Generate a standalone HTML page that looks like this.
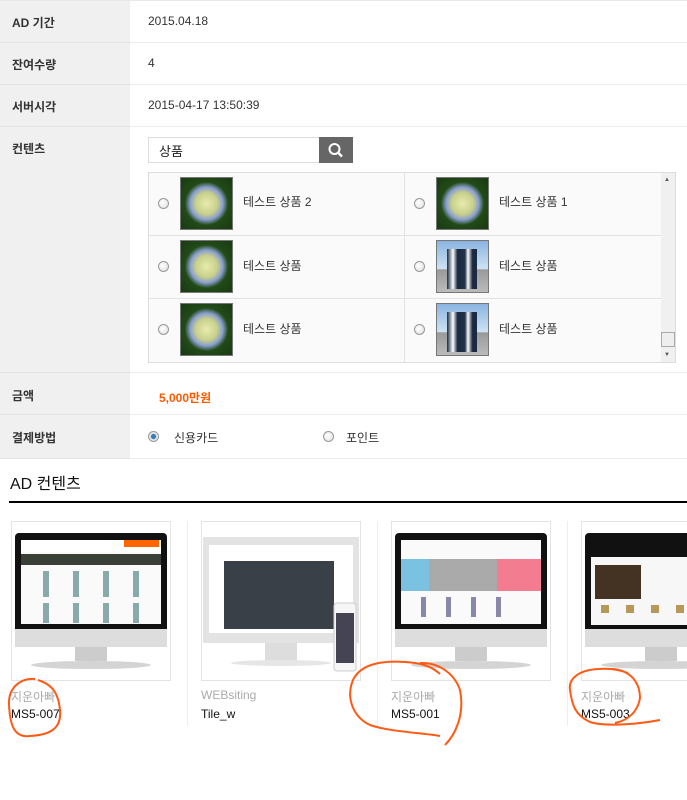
<!DOCTYPE html>
<html><head><meta charset="utf-8"><style>
*{margin:0;padding:0;box-sizing:border-box}
body{width:687px;height:800px;background:#fff;font-family:"Liberation Sans","Noto Sans CJK KR",sans-serif;font-size:12px;color:#333;position:relative;overflow:hidden}
.a{position:absolute}
.lab{position:absolute;left:0;width:130px;background:#f0f0f0;border-bottom:1px solid #e2e2e2}
.lab span{position:absolute;left:12px;font-weight:bold;font-size:12px;color:#333}
.val{position:absolute;left:130px;right:0;border-bottom:1px solid #ececec}
.radio{position:absolute;width:11px;height:11px;border-radius:50%;background:radial-gradient(circle at 40% 40%,#fff,#ddd);border:1px solid #999}
.thumb{position:absolute;width:53px;height:53px;border:1px solid #777}
.fl{background:radial-gradient(circle at 50% 50%,#e8ecb0 0,#c8d08a 30%,#8a9fd0 45%,#224a18 60%,#183a12 100%)}
.pg{background:linear-gradient(#8ab4e0,#cfe2f4 55%,#999 56%,#bbb);}
.pg:after{content:"";position:absolute;left:10px;top:8px;width:30px;height:40px;background:linear-gradient(90deg,#1a2a40 0,#fff 20%,#1a2a40 35%,#22334a 60%,#fff 70%,#1a2a40 85%)}
.ct{position:absolute;font-size:12px;color:#333}
.card{position:absolute;top:521px;width:160px;height:160px;border:1px solid #e4e4e4}
.sep{position:absolute;top:521px;width:1px;height:205px;background:#eee}
.g{position:absolute;font-size:12px;color:#aaa}
.k{position:absolute;font-size:12px;color:#111}
</style></head><body>
<div class="a" style="left:0;top:0;width:687px;height:1px;background:#e8e8e8"></div>
<div class="lab" style="top:1px;height:42px"><span style="top:13px">AD 기간</span></div>
<div class="val" style="top:1px;height:42px"><span class="a" style="left:18px;top:13px">2015.04.18</span></div>
<div class="lab" style="top:43px;height:42px"><span style="top:13px">잔여수량</span></div>
<div class="val" style="top:43px;height:42px"><span class="a" style="left:18px;top:13px">4</span></div>
<div class="lab" style="top:85px;height:42px"><span style="top:13px">서버시각</span></div>
<div class="val" style="top:85px;height:42px"><span class="a" style="left:18px;top:13px">2015-04-17 13:50:39</span></div>
<div class="lab" style="top:127px;height:246px"><span style="top:13px">컨텐츠</span></div>
<div class="val" style="top:127px;height:246px"></div>
<div class="a" style="left:148px;top:137px;width:172px;height:26px;border:1px solid #ddd;background:#fff"><span class="a" style="left:10px;top:3px;font-size:13px;color:#222">상품</span></div>
<div class="a" style="left:319px;top:137px;width:34px;height:26px;background:#666">
<svg width="34" height="26"><circle cx="15.5" cy="12" r="5" fill="none" stroke="#fff" stroke-width="2"/><line x1="19" y1="15.5" x2="23" y2="19.5" stroke="#fff" stroke-width="2.4"/></svg></div>
<div class="a" style="left:148px;top:172px;width:528px;height:191px;border:1px solid #ddd;background:#fafafa"></div>
<div class="a" style="left:661px;top:173px;width:14px;height:189px;background:#f0f0f0"></div>
<div class="a" style="left:664px;top:177px;font-size:6px;color:#555">▲</div>
<div class="a" style="left:664px;top:352px;font-size:6px;color:#555">▼</div>
<div class="a" style="left:661px;top:332px;width:14px;height:15px;border:1px solid #aaa;background:#eee"></div>
<div class="a" style="left:404px;top:173px;width:1px;height:189px;background:#e3e3e3"></div>
<div class="a" style="left:149px;top:235px;width:512px;height:1px;background:#e3e3e3"></div>
<div class="a" style="left:149px;top:298px;width:512px;height:1px;background:#e3e3e3"></div>
<div class="radio" style="left:158px;top:198px"></div><div class="thumb fl" style="left:180px;top:177px"></div><div class="ct" style="left:243px;top:193px">테스트 상품 2</div>
<div class="radio" style="left:414px;top:198px"></div><div class="thumb fl" style="left:436px;top:177px"></div><div class="ct" style="left:499px;top:193px">테스트 상품 1</div>
<div class="radio" style="left:158px;top:261px"></div><div class="thumb fl" style="left:180px;top:240px"></div><div class="ct" style="left:243px;top:257px">테스트 상품</div>
<div class="radio" style="left:414px;top:261px"></div><div class="thumb pg" style="left:436px;top:240px"></div><div class="ct" style="left:499px;top:257px">테스트 상품</div>
<div class="radio" style="left:158px;top:324px"></div><div class="thumb fl" style="left:180px;top:303px"></div><div class="ct" style="left:243px;top:320px">테스트 상품</div>
<div class="radio" style="left:414px;top:324px"></div><div class="thumb pg" style="left:436px;top:303px"></div><div class="ct" style="left:499px;top:320px">테스트 상품</div>
<div class="lab" style="top:373px;height:42px"><span style="top:14px">금액</span></div>
<div class="val" style="top:373px;height:42px"><span class="a" style="left:29px;top:16px;color:#ff5a00;font-weight:bold">5,000만원</span></div>
<div class="lab" style="top:415px;height:44px"><span style="top:14px">결제방법</span></div>
<div class="val" style="top:415px;height:44px"></div>
<div class="radio" style="left:148px;top:431px;background:radial-gradient(circle,#2a7fc0 0,#2a7fc0 35%,#ddd 45%,#fff)"></div>
<span class="a" style="left:174px;top:429px">신용카드</span>
<div class="radio" style="left:323px;top:431px"></div>
<span class="a" style="left:346px;top:429px">포인트</span>
<div class="a" style="left:10px;top:470px;font-size:16px;color:#111">AD 컨텐츠</div>
<div class="a" style="left:9px;top:501px;width:678px;height:2px;background:#000"></div>
<div class="sep" style="left:187px"></div><div class="sep" style="left:377px"></div><div class="sep" style="left:567px"></div>
<svg class="a" style="left:0;top:0" width="687" height="800">
<defs><g id="mon"><rect x="4" y="12" width="152" height="100" rx="4" fill="#111"/><rect x="10" y="19" width="140" height="84" fill="#fafafa"/><rect x="4" y="108" width="152" height="18" fill="#ddd"/><rect x="64" y="126" width="32" height="14" fill="#ccc"/><ellipse cx="80" cy="144" rx="60" ry="4" fill="#d4d4d4"/></g></defs>
<g transform="translate(11,521)"><use href="#mon"/><rect x="10" y="19" width="140" height="12" fill="#fff"/><rect x="10" y="33" width="140" height="11" fill="#3a4038"/><rect x="113" y="19" width="35" height="7" fill="#f60"/>
<g fill="#8aa"><rect x="32" y="50" width="6" height="26"/><rect x="62" y="50" width="6" height="26"/><rect x="92" y="50" width="6" height="26"/><rect x="122" y="50" width="6" height="26"/><rect x="32" y="82" width="6" height="20"/><rect x="62" y="82" width="6" height="20"/><rect x="92" y="82" width="6" height="20"/><rect x="122" y="82" width="6" height="20"/></g></g>
<g transform="translate(201,521)"><rect x="2" y="16" width="156" height="106" fill="#e3e3e3"/><rect x="8" y="24" width="144" height="88" fill="#fff"/><rect x="23" y="40" width="110" height="68" fill="#3a4048"/><rect x="64" y="122" width="32" height="18" fill="#ddd"/><ellipse cx="80" cy="142" rx="50" ry="3" fill="#e6e6e6"/><rect x="133" y="82" width="22" height="68" rx="3" fill="#f6f6f6" stroke="#ccc"/><rect x="135" y="92" width="18" height="50" fill="#445"/></g>
<g transform="translate(391,521)"><use href="#mon"/><rect x="10" y="38" width="140" height="32" fill="#aaa"/><rect x="106" y="38" width="44" height="32" fill="#f47c90"/><rect x="10" y="38" width="28" height="32" fill="#7ac2e0"/><g fill="#88a"><rect x="30" y="76" width="5" height="20"/><rect x="55" y="76" width="5" height="20"/><rect x="80" y="76" width="5" height="20"/><rect x="105" y="76" width="5" height="20"/></g></g>
<g transform="translate(581,521)"><rect x="0" y="0" width="106" height="160" fill="#fff"/><rect x="4" y="12" width="110" height="100" rx="4" fill="#111"/><rect x="10" y="36" width="100" height="68" fill="#f7f7f7"/><rect x="14" y="44" width="46" height="34" fill="#443322"/><g fill="#b89858"><rect x="20" y="84" width="8" height="8"/><rect x="45" y="84" width="8" height="8"/><rect x="70" y="84" width="8" height="8"/><rect x="95" y="84" width="8" height="8"/></g><rect x="4" y="108" width="110" height="18" fill="#ddd"/><rect x="64" y="126" width="32" height="14" fill="#ccc"/><ellipse cx="80" cy="144" rx="60" ry="4" fill="#d4d4d4"/></g>
</svg>
<div class="card" style="left:11px"></div>
<div class="card" style="left:201px"></div>
<div class="card" style="left:391px"></div>
<div class="card" style="left:581px;width:120px"></div>
<div class="g" style="left:11px;top:688px">지운아빠</div><div class="k" style="left:11px;top:707px">MS5-007</div>
<div class="g" style="left:201px;top:688px">WEBsiting</div><div class="k" style="left:201px;top:707px">Tile_w</div>
<div class="g" style="left:391px;top:688px">지운아빠</div><div class="k" style="left:391px;top:707px">MS5-001</div>
<div class="g" style="left:581px;top:688px">지운아빠</div><div class="k" style="left:581px;top:707px">MS5-003</div>
<svg class="a" style="left:0;top:0" width="687" height="800" fill="none" stroke="#ff5a14" stroke-width="2">
<path d="M35 679 C20 678 8 688 9 705 C10 725 14 738 30 736 C48 735 62 730 60 710 C58 690 50 684 38 680"/>
<path d="M440 674 C430 665 420 663 405 662 C380 660 360 665 353 680 C345 700 355 718 370 725 C390 732 425 733 440 736 M420 663 C440 662 455 675 460 690 C465 715 455 735 445 745"/>
<path d="M628 673 C620 670 610 668 598 669 C580 670 568 678 570 690 C572 705 575 715 590 722 C605 727 640 724 660 720 M612 669 C630 670 640 682 640 698 C638 710 630 720 615 723"/>
</svg>
</body></html>
